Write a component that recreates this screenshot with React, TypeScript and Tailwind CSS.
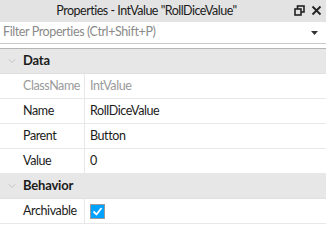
import { ChevronDown } from 'lucide-react';

const font = { fontFamily: 'Lato, "Noto Sans", sans-serif' };

function Header({ label }: { label: string }) {
  return (
    <div className="flex items-center h-[25px] bg-[#e7e7e7] border-b border-[#e0e0e0]">
      <ChevronDown size={12} strokeWidth={1.3} className="text-[#b0b0b0] ml-[6px] mr-[5px]" />
      <span className="font-bold text-[13px] tracking-[-0.2px] text-[#1b1b1b]">{label}</span>
    </div>
  );
}

function Row({ name, children, dim }: { name: string; children: React.ReactNode; dim?: boolean }) {
  return (
    <div className="flex h-[25px] border-b border-[#e8e8e8] text-[12.5px] tracking-[-0.4px]">
      <div className={`w-[85px] pl-[23px] flex items-center border-r border-[#e8e8e8] ${dim ? 'text-[#9a9a9a]' : 'text-[#1b1b1b]'}`}>{name}</div>
      <div className={`flex-1 pl-[5px] flex items-center ${dim ? 'text-[#9a9a9a]' : 'text-[#1b1b1b]'}`}>{children}</div>
    </div>
  );
}

export default function App() {
  return (
    <div className="w-[326px] h-[240px] bg-white overflow-hidden" style={font}>
      <div className="flex items-center h-[22px] bg-[#e3e3e3] relative">
        <span className="flex-1 text-center text-[12.5px] tracking-[-0.5px] text-[#1b1b1b] pr-[33px]">Properties - IntValue "RollDiceValue"</span>
        <div className="absolute right-[4px] top-[5px] flex items-center gap-[6px]">
          <svg width="11" height="11" viewBox="0 0 11 11">
            <rect x="3.5" y="1" width="6.5" height="6" fill="none" stroke="#222" strokeWidth="1.6" />
            <rect x="1" y="4" width="6" height="6" fill="#e3e3e3" stroke="#222" strokeWidth="1.6" />
          </svg>
          <svg width="11" height="11" viewBox="0 0 11 11">
            <path d="M1.5 1.5 L9.5 9.5 M9.5 1.5 L1.5 9.5" stroke="#222" strokeWidth="1.8" />
          </svg>
        </div>
      </div>
      <div className="flex items-center h-[22px] border-b border-[#c8c8c8] bg-white">
        <span className="flex-1 pl-[3px] text-[12.5px] tracking-[-0.4px] text-[#8a8a8a]">Filter Properties (Ctrl+Shift+P)</span>
        <svg width="7" height="4" viewBox="0 0 7 4" className="mr-[8px]">
          <path d="M0 0 L7 0 L3.5 4 Z" fill="#333" />
        </svg>
      </div>
      <div className="h-[4px]" />
      <div className="border-t border-[#b5b5b5]">
        <Header label="Data" />
        <Row name="ClassName" dim>IntValue</Row>
        <Row name="Name">RollDiceValue</Row>
        <Row name="Parent">Button</Row>
        <Row name="Value">0</Row>
        <Header label="Behavior" />
        <Row name="Archivable">
          <div className="w-[15px] h-[15px] bg-[#00a2ff] border border-[#9a9a9a] flex items-center justify-center">
            <svg width="11" height="11" viewBox="0 0 11 11">
              <path d="M1.5 5.5 L4.5 8.5 L9.5 2" fill="none" stroke="white" strokeWidth="1.8" />
            </svg>
          </div>
        </Row>
      </div>
    </div>
  );
}
